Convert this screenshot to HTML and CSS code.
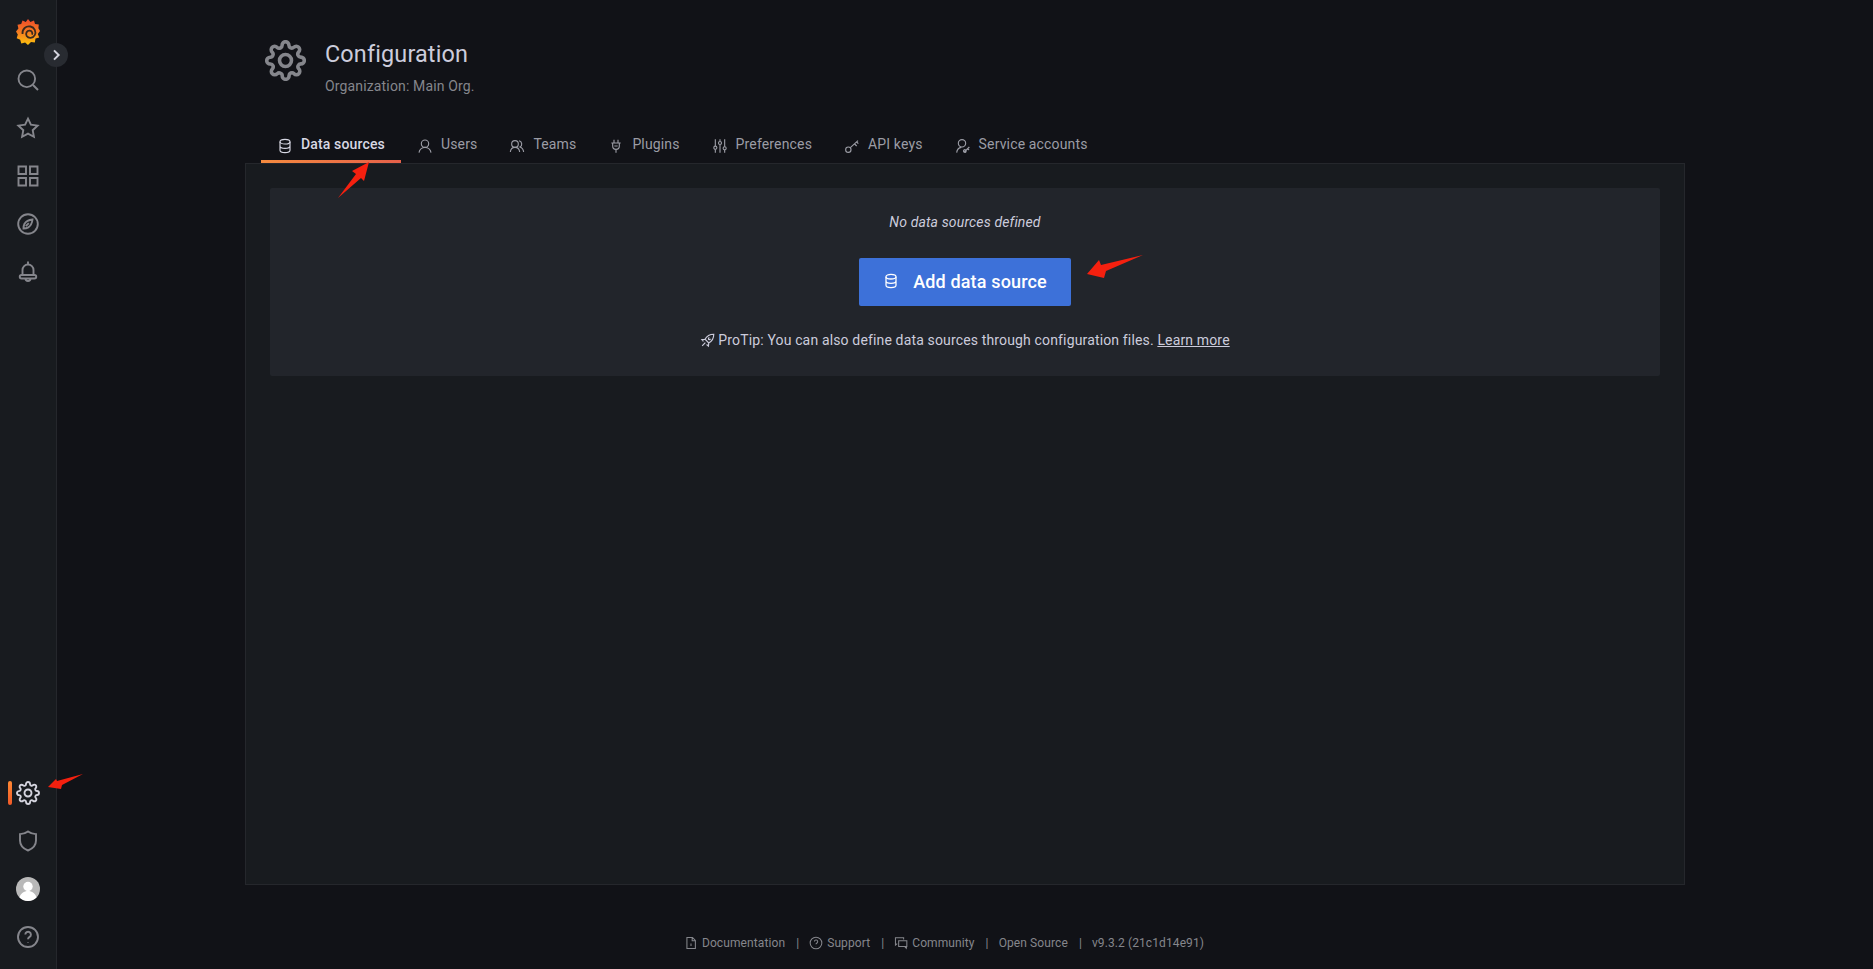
FILE: index.html
```html
<!DOCTYPE html>
<html lang="en">
<head>
    <meta charset="UTF-8">
    <meta name="viewport" content="width=device-width, initial-scale=1.0">
    <title>Configuration: Data sources</title>
    <link rel="stylesheet" href="styles.css">
</head>
<body>
    <svg class="sprites" width="0" height="0">
        <defs>
            <linearGradient id="logoFill" x1="0" y1="0" x2="0" y2="1">
                <stop offset="0" stop-color="#ee4a2c"/>
                <stop offset="0.5" stop-color="#f57c20"/>
                <stop offset="1" stop-color="#fcc30d"/>
            </linearGradient>
            <symbol id="i-gear" viewBox="0 0 24 24">
                <path d="M12 15.500a3.500 3.500 0 1 0 0-7 3.500 3.500 0 0 0 0 7z"/>
                <path d="M19.400 15a1.650 1.650 0 0 0 .33 1.820l.06.06a2 2 0 0 1 0 2.830 2 2 0 0 1-2.830 0l-.06-.06a1.650 1.650 0 0 0-1.820-.33 1.650 1.650 0 0 0-1 1.510V21a2 2 0 0 1-2 2 2 2 0 0 1-2-2v-.09A1.650 1.650 0 0 0 9 19.400a1.650 1.650 0 0 0-1.820.33l-.06.06a2 2 0 0 1-2.830 0 2 2 0 0 1 0-2.830l.06-.06a1.650 1.650 0 0 0 .33-1.820 1.650 1.650 0 0 0-1.510-1H3a2 2 0 0 1-2-2 2 2 0 0 1 2-2h.09A1.650 1.650 0 0 0 4.600 9a1.650 1.650 0 0 0-.33-1.820l-.06-.06a2 2 0 0 1 0-2.830 2 2 0 0 1 2.830 0l.06.06a1.650 1.650 0 0 0 1.820.33H9a1.650 1.650 0 0 0 1-1.510V3a2 2 0 0 1 2-2 2 2 0 0 1 2 2v.09a1.650 1.650 0 0 0 1 1.510 1.650 1.650 0 0 0 1.820-.33l.06-.06a2 2 0 0 1 2.830 0 2 2 0 0 1 0 2.830l-.06.06a1.650 1.650 0 0 0-.33 1.820V9a1.650 1.650 0 0 0 1.510 1H21a2 2 0 0 1 2 2 2 2 0 0 1-2 2h-.09a1.650 1.650 0 0 0-1.510 1z"/>
            </symbol>
            <symbol id="i-search" viewBox="0 0 24 24">
                <circle cx="10.800" cy="10.800" r="8.300"/>
                <path d="M17 17l5 5"/>
            </symbol>
            <symbol id="i-star" viewBox="0 0 24 24">
                <path d="M12 2.600l2.900 6.100 6.700.9-4.900 4.600 1.200 6.600-5.900-3.200-5.900 3.200 1.200-6.600-4.900-4.600 6.700-.9z"/>
            </symbol>
            <symbol id="i-apps" viewBox="0 0 24 24">
                <path d="M2.500 2.500h7.500V10H2.500zM14 2.500h7.500V10H14zM2.500 14H10v7.500H2.500zM14 14h7.500v7.500H14z"/>
            </symbol>
            <symbol id="i-compass" viewBox="0 0 24 24">
                <circle cx="12" cy="12" r="9.800"/>
                <path d="M16.500 7.500c-3.500.4-6.600 1.900-8 4.200-.7 1.300-1 3-1 4.800 2 0 3.600-.4 4.800-1.100 2.300-1.500 3.800-4.400 4.200-7.900zM9.800 14.200l3-3"/>
            </symbol>
            <symbol id="i-bell" viewBox="0 0 24 24">
                <path d="M12 1.500v2.500M6.500 15v-5a5.500 5.500 0 0 1 11 0v5M5.500 15h13a1.700 1.700 0 0 1 0 3.500h-13a1.700 1.700 0 0 1 0-3.500zM9.500 18.500a2.500 2.500 0 0 0 5 0"/>
            </symbol>
            <symbol id="i-shield" viewBox="0 0 24 24">
                <path d="M12 2.500c2.300 1.700 5 2.600 8 2.600v6.400c0 4.500-3 8.100-8 10-5-1.900-8-5.500-8-10V5.100c3 0 5.700-.9 8-2.600z"/>
            </symbol>
            <symbol id="i-help" viewBox="0 0 24 24">
                <circle cx="12" cy="12" r="10"/>
                <path d="M9.300 9.500a2.800 2.800 0 1 1 4.300 2.400c-.9.600-1.600 1.100-1.600 2.300M12 17v.4"/>
            </symbol>
            <symbol id="i-database" viewBox="0 0 24 24">
                <ellipse cx="12" cy="5.500" rx="7.500" ry="3.500"/>
                <path d="M4.500 5.500v13c0 1.900 3.400 3.500 7.500 3.500s7.500-1.600 7.500-3.500v-13M4.500 12c0 1.900 3.400 3.500 7.500 3.500s7.500-1.600 7.500-3.500"/>
            </symbol>
            <symbol id="i-user" viewBox="0 0 24 24">
                <circle cx="12" cy="8.500" r="5.500"/>
                <path d="M3 22c.6-4.500 4.300-8 9-8s8.400 3.500 9 8"/>
            </symbol>
            <symbol id="i-users" viewBox="0 0 24 24">
                <circle cx="9" cy="9" r="5"/>
                <path d="M2 21c.4-4 3.400-7 7-7s6.600 3 7 7M15 4.200a5 5 0 0 1 1.500 9.300c2.900 1 5 3.900 5.500 7.500"/>
            </symbol>
            <symbol id="i-plug" viewBox="0 0 24 24">
                <path d="M9 2.500v5M15 2.500v5M5 7.500h14M7 7.500v4.500a5 5 0 0 0 10 0V7.500M12 17v5M9.500 12h5"/>
            </symbol>
            <symbol id="i-sliders" viewBox="0 0 24 24">
                <path d="M5 2v10M5 17v5M12 2v3M12 10v12M19 2v11M19 18v4"/>
                <circle cx="5" cy="14.500" r="2.300"/>
                <circle cx="12" cy="7.500" r="2.300"/>
                <circle cx="19" cy="15.500" r="2.300"/>
            </symbol>
            <symbol id="i-key" viewBox="0 0 24 24">
                <circle cx="6.500" cy="17.500" r="4"/>
                <path d="M9.500 14.500L21 4M16 9l3 3M19 6l2.500 2.500"/>
            </symbol>
            <symbol id="i-account" viewBox="0 0 24 24">
                <circle cx="10.500" cy="8" r="5.500"/>
                <path d="M2.500 22c.5-4.500 3.300-7.500 7-8M14 21l7.500-7.500M13.500 18a2 2 0 1 0 3 2.500 2 2 0 0 0-3-2.500zM19 16l2 2"/>
            </symbol>
            <symbol id="i-rocket" viewBox="0 0 24 24">
                <path d="M22 2c-6 0-11 2.500-14 8l6 6c5.500-3 8-8 8-14zM8 10l-5 .5 2.500 3M14 16l-.5 5-3-2.500M8.500 15.500L3.500 20.500M15 7.500a1.500 1.500 0 1 0 1.500 1.500"/>
            </symbol>
            <symbol id="i-doc" viewBox="0 0 24 24">
                <path d="M5 2.500h9.500l5 5v14H5zM14 2.500v5.500h5.500M12 17v-4M12 10.500v.2"/>
            </symbol>
            <symbol id="i-comments" viewBox="0 0 24 24">
                <path d="M16.500 6V3H2.500v12.500l3-2.500M8 8h14v10h-9.500H8zM18 18l3 3v-3"/>
            </symbol>
        </defs>
    </svg>

    <div class="app">
        <nav class="sidebar">
            <div class="nav-item">
                <svg class="logo" viewBox="0 0 24 26">
                    <path fill="url(#logoFill)" d="M12 0l2.400 3 3.600-1.600 1 3.700 3.800.3-.4 3.800L24 12l-2.200 2.900 1.400 3.600-3.700 1.100-.7 3.800-3.800-.5L12 26l-2.900-2.500-3.800.9-1.100-3.700-3.500-1.500 1.100-3.700L0 12.500l2.400-3-.9-3.800 3.700-.8L6.500 1.400l3.300 1.700z"/>
                    <path class="logo-swirl" d="M6.500 15C6 10 10 6.500 14.500 7.500c4 .9 6 5 4.200 8.700-1.700 3.300-6.200 3.600-8 .8-1.500-2.600.2-5.500 3-5.300 2.200.2 3.200 2.300 2.300 4"/>
                </svg>
            </div>
            <button class="expand" aria-label="Expand menu">
                <svg viewBox="0 0 24 24"><path d="M9 5l7 7-7 7"/></svg>
            </button>
            <a class="nav-item"><svg class="icon"><use href="#i-search"/></svg></a>
            <a class="nav-item"><svg class="icon"><use href="#i-star"/></svg></a>
            <a class="nav-item"><svg class="icon"><use href="#i-apps"/></svg></a>
            <a class="nav-item"><svg class="icon"><use href="#i-compass"/></svg></a>
            <a class="nav-item"><svg class="icon"><use href="#i-bell"/></svg></a>
            <div class="nav-bottom">
                <a class="nav-item active"><svg class="icon"><use href="#i-gear"/></svg></a>
                <a class="nav-item"><svg class="icon"><use href="#i-shield"/></svg></a>
                <a class="nav-item">
                    <svg class="avatar" viewBox="0 0 24 24">
                        <circle cx="12" cy="12" r="12" fill="#b9b9b9"/>
                        <circle cx="12" cy="9.500" r="4.700" fill="#fff"/>
                        <path fill="#fff" d="M3.500 20.500c1-4 4.500-6.500 8.500-6.500s7.500 2.500 8.500 6.500A12 12 0 0 1 12 24a12 12 0 0 1-8.500-3.500z"/>
                    </svg>
                </a>
                <a class="nav-item"><svg class="icon"><use href="#i-help"/></svg></a>
            </div>
        </nav>

        <main class="main">
            <div class="page">
                <header class="page-header">
                    <svg class="header-icon"><use href="#i-gear"/></svg>
                    <div>
                        <h1>Configuration</h1>
                        <p>Organization: Main Org.</p>
                    </div>
                </header>

                <div class="tabs">
                    <a class="tab active"><svg><use href="#i-database"/></svg>Data sources</a>
                    <a class="tab"><svg><use href="#i-user"/></svg>Users</a>
                    <a class="tab"><svg><use href="#i-users"/></svg>Teams</a>
                    <a class="tab"><svg><use href="#i-plug"/></svg>Plugins</a>
                    <a class="tab"><svg><use href="#i-sliders"/></svg>Preferences</a>
                    <a class="tab"><svg><use href="#i-key"/></svg>API keys</a>
                    <a class="tab"><svg><use href="#i-account"/></svg>Service accounts</a>
                </div>

                <section class="panel">
                    <div class="empty">
                        <p class="empty-title">No data sources defined</p>
                        <button class="add-btn"><svg><use href="#i-database"/></svg>Add data source</button>
                        <p class="protip"><svg><use href="#i-rocket"/></svg>ProTip: You can also define data sources through configuration files. <a>Learn more</a></p>
                    </div>
                </section>
            </div>

            <footer class="footer">
                <a><svg><use href="#i-doc"/></svg>Documentation</a>
                <a><svg><use href="#i-help"/></svg>Support</a>
                <a><svg><use href="#i-comments"/></svg>Community</a>
                <a>Open Source</a>
                <a>v9.3.2 (21c1d14e91)</a>
            </footer>
        </main>
    </div>

    <!-- red arrows drawn on top of the screenshot -->
    <svg class="arrows" viewBox="0 0 1873 969">
        <path d="M369 162L352 171 356 174 338 198 361 178 364 181z"/>
        <path d="M1087 274L1099 260 1101 265 1143 255 1106 271 1104 278z"/>
        <path d="M48 787L56 779 57 781 83 774 62 785 61 789z"/>
    </svg>
</body>
</html>
```

FILE: styles.css
```css
* {
    box-sizing: border-box;
}
body {
    margin: 0;
    font-family: 'Roboto', 'Liberation Sans', sans-serif;
    font-size: 14px;
    line-height: 21px;
    letter-spacing: 0.15px;
    background: #111217;
    color: #ccccdc;
    overflow: hidden;
}
p, h1 {
    margin: 0;
}
button {
    font-family: inherit;
    letter-spacing: inherit;
    border: none;
    cursor: pointer;
}
.sprites {
    position: absolute;
}
.app {
    display: flex;
    height: 969px;
}

/* sidebar */
.sidebar {
    position: relative;
    flex: 0 0 57px;
    display: flex;
    flex-direction: column;
    padding: 8px 0;
    background: #181b1f;
    border-right: 1px solid #25272c;
}
.nav-item {
    position: relative;
    display: flex;
    align-items: center;
    justify-content: center;
    height: 48px;
}
.nav-bottom {
    margin-top: auto;
}
.icon {
    width: 24px;
    height: 24px;
    fill: none;
    stroke: #85868c;
    stroke-width: 1.9;
}
.nav-item.active .icon {
    stroke: #d4d4de;
}
.nav-item.active::before {
    content: '';
    position: absolute;
    left: 8px;
    top: 12px;
    width: 4px;
    height: 24px;
    border-radius: 2px;
    background: linear-gradient(#ff8833, #f05a28);
}
.logo {
    width: 24px;
    height: 26px;
    margin-right: 1px;
}
.logo-swirl {
    fill: none;
    stroke: #3b2a1e;
    stroke-width: 1.8;
}
.avatar {
    width: 24px;
    height: 24px;
}
.expand {
    position: absolute;
    top: 43px;
    left: 44px;
    display: flex;
    align-items: center;
    justify-content: center;
    width: 24px;
    height: 24px;
    padding: 0;
    border-radius: 50%;
    background: #282b31;
}
.expand svg {
    width: 16px;
    height: 16px;
    fill: none;
    stroke: #d4d4de;
    stroke-width: 3;
}

/* page */
.main {
    flex: 1;
    display: flex;
    flex-direction: column;
}
.page {
    flex: 1;
    display: flex;
    flex-direction: column;
    width: 1440px;
    margin: 0 auto;
}
.page-header {
    display: flex;
    height: 121px;
    padding: 40px 0 0 20px;
}
.header-icon {
    width: 41px;
    height: 41px;
    margin-right: 19px;
    fill: none;
    stroke: #85868c;
    stroke-width: 2.1;
}
.page-header h1 {
    font-size: 23.4px;
    font-weight: 400;
    line-height: 30px;
    margin-top: -1px;
}
.page-header p {
    margin-top: 7px;
    color: #85868c;
}
.tabs {
    display: flex;
    padding-left: 16px;
}
.tab {
    display: flex;
    align-items: center;
    height: 42px;
    padding: 7px 16px 0;
    border-bottom: 3px solid transparent;
    color: #9b9ca5;
}
.tab svg {
    width: 16px;
    height: 16px;
    margin: 4px 8px 0 0;
    fill: none;
    stroke: currentColor;
    stroke-width: 1.7;
}
.tab.active {
    font-weight: 500;
    color: #d8d8e4;
    border-image: linear-gradient(90deg, #f58b3f, #e5604a) 1;
}
.panel {
    flex: 1;
    padding: 24px;
    background: #181b1f;
    border: 1px solid #25272c;
}
.empty {
    padding: 24px 0 25px;
    text-align: center;
    background: #22252b;
    border-radius: 2px;
}
.empty-title {
    font-style: italic;
}
.add-btn {
    display: inline-flex;
    align-items: center;
    height: 48px;
    margin: 25px 0 24px;
    padding: 0 24px 2px;
    font-size: 18px;
    font-weight: 500;
    color: #fff;
    background: #3d71d9;
    border-radius: 2px;
}
.add-btn svg {
    width: 16px;
    height: 16px;
    margin-right: 14px;
    fill: none;
    stroke: #fff;
    stroke-width: 1.9;
}
.protip svg {
    width: 15px;
    height: 15px;
    margin-right: 3px;
    vertical-align: -3px;
    fill: none;
    stroke: currentColor;
    stroke-width: 1.9;
}
.protip a {
    text-decoration: underline;
}

/* footer */
.footer {
    display: flex;
    align-items: center;
    justify-content: center;
    flex: 0 0 84px;
    padding: 32px 42px 0 0;
    font-size: 12px;
    letter-spacing: 0.1px;
    color: #85868c;
}
.footer a {
    display: flex;
    align-items: center;
}
.footer a + a::before {
    content: '|';
    margin: 0 10px 0 11px;
}
.footer svg {
    width: 14px;
    height: 14px;
    margin-right: 4px;
    fill: none;
    stroke: currentColor;
    stroke-width: 1.8;
}

.arrows {
    position: absolute;
    top: 0;
    left: 0;
    width: 1873px;
    height: 969px;
    fill: #f5200f;
    pointer-events: none;
}
```
